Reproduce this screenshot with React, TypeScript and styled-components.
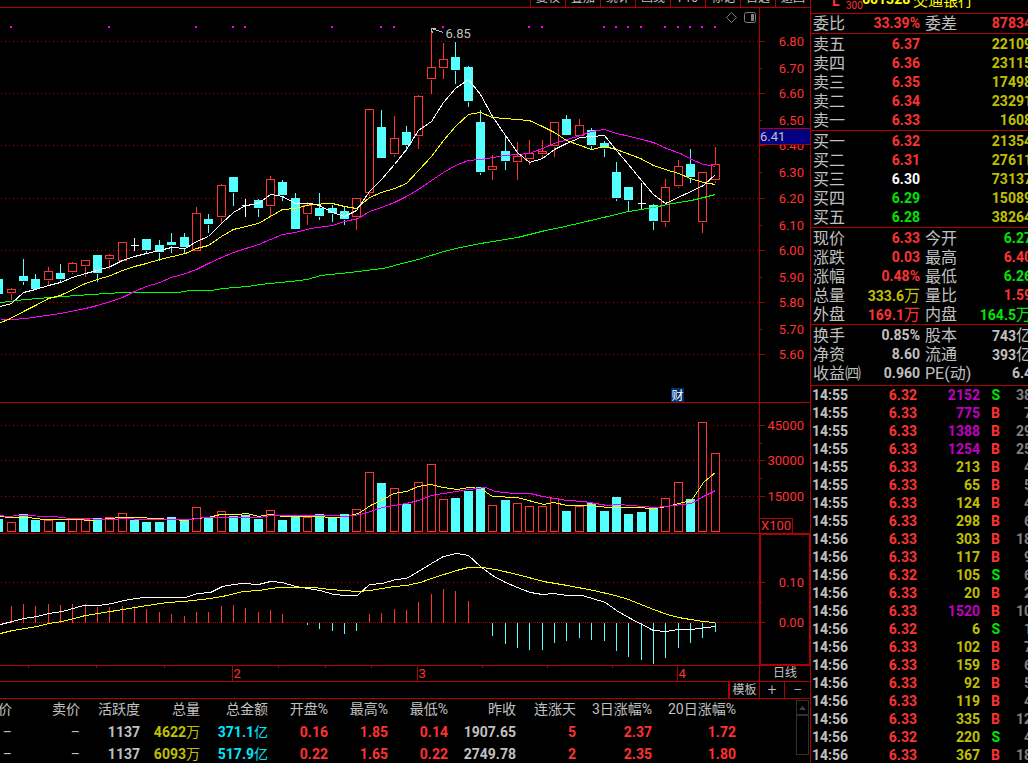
import React from 'react';
import styled, { createGlobalStyle } from 'styled-components';

const c = {
  line: '#b00000',
  red: '#ff3232',
  green: '#00e600',
  cyan: '#54ffff',
  amount: '#00e6ff',
  yellow: '#c0c000',
  bright: '#ffff00',
  magenta: '#ff00ff',
  violet: '#c000c0',
  gray: '#c0c0c0',
  dim: '#808080',
  white: '#ffffff',
};

const GlobalStyle = createGlobalStyle`
  * { box-sizing: border-box; }
  html, body { margin: 0; background: #000; }
  body { overflow: hidden; }
  body, button, table {
    font-family: Roboto, "Noto Sans CJK SC", sans-serif;
    color: ${c.gray};
  }
`;

/* ---------- chart data ---------- */

type Kind = 'up' | 'down' | 'flat';
type Candle = [number, number, number, number, number, Kind];

// x, high, body top, body bottom, low, kind
const candles: Candle[] = [
  [-2, 279, 279, 294, 294, 'down'],
  [11, 287, 289, 293, 299, 'up'],
  [23, 258, 276, 281, 284, 'down'],
  [35, 273, 279, 289, 289, 'down'],
  [48, 266, 271, 280, 284, 'up'],
  [60, 263, 273, 279, 281, 'down'],
  [72, 261, 263, 272, 273, 'up'],
  [85, 259, 260, 266, 276, 'up'],
  [97, 255, 255, 273, 281, 'down'],
  [109, 253, 255, 259, 268, 'up'],
  [122, 242, 242, 261, 261, 'up'],
  [134, 237, 245, 246, 250, 'flat'],
  [146, 239, 239, 250, 252, 'down'],
  [159, 239, 245, 252, 260, 'down'],
  [171, 232, 242, 245, 252, 'down'],
  [184, 232, 237, 247, 252, 'down'],
  [196, 206, 213, 251, 251, 'up'],
  [208, 213, 219, 224, 232, 'down'],
  [221, 183, 185, 217, 223, 'up'],
  [233, 177, 177, 192, 205, 'down'],
  [245, 198, 205, 206, 216, 'flat'],
  [258, 198, 200, 208, 216, 'down'],
  [270, 175, 179, 206, 216, 'up'],
  [282, 179, 182, 195, 200, 'down'],
  [295, 192, 198, 229, 229, 'down'],
  [307, 201, 205, 214, 224, 'up'],
  [319, 192, 208, 216, 219, 'down'],
  [332, 204, 208, 213, 221, 'down'],
  [344, 205, 211, 219, 224, 'down'],
  [356, 198, 198, 217, 229, 'up'],
  [369, 109, 109, 193, 195, 'up'],
  [381, 109, 127, 158, 158, 'down'],
  [394, 115, 138, 154, 156, 'up'],
  [406, 125, 132, 145, 150, 'down'],
  [418, 94, 96, 136, 148, 'up'],
  [431, 30, 67, 79, 93, 'up'],
  [443, 42, 59, 68, 78, 'up'],
  [455, 41, 57, 70, 83, 'down'],
  [468, 65, 67, 101, 106, 'down'],
  [480, 109, 122, 172, 174, 'down'],
  [492, 154, 166, 170, 179, 'up'],
  [505, 134, 151, 161, 169, 'down'],
  [517, 141, 156, 162, 179, 'up'],
  [529, 139, 153, 159, 164, 'up'],
  [542, 139, 151, 154, 158, 'up'],
  [554, 122, 122, 146, 156, 'up'],
  [566, 114, 119, 135, 135, 'down'],
  [579, 118, 125, 136, 136, 'up'],
  [591, 127, 130, 145, 148, 'down'],
  [604, 140, 143, 148, 156, 'down'],
  [616, 161, 172, 198, 200, 'down'],
  [628, 187, 187, 200, 211, 'down'],
  [641, 182, 203, 204, 208, 'flat'],
  [653, 203, 205, 221, 229, 'down'],
  [665, 178, 187, 222, 226, 'up'],
  [678, 159, 166, 186, 187, 'up'],
  [690, 148, 164, 177, 182, 'down'],
  [702, 172, 172, 222, 232, 'up'],
  [715, 146, 164, 180, 182, 'up'],
];

const volumeTops = [
  519, 522, 514, 520, 520, 522, 519, 519, 518, 517, 513, 520, 522, 522, 517, 519, 507, 518, 511, 516,
  515, 519, 510, 520, 517, 517, 514, 517, 514, 509, 472, 483, 488, 504, 482, 464, 499, 498, 491, 487,
  505, 500, 503, 506, 506, 498, 511, 506, 503, 511, 497, 514, 512, 508, 498, 482, 499, 422, 453,
];

// x, end of the bar; the bars start on the zero line
const macdBars: [number, number][] = [
  [11, 605], [23, 603], [35, 605], [48, 603], [60, 604], [72, 603], [85, 603], [97, 606], [109, 606],
  [122, 605], [134, 605], [146, 608], [159, 611], [171, 613], [184, 615], [196, 611], [208, 611], [221, 605],
  [233, 604], [245, 607], [258, 611], [270, 609], [282, 613], [307, 624], [319, 628], [332, 630], [344, 633],
  [356, 630], [369, 613], [381, 612], [394, 608], [406, 609], [418, 601], [431, 593], [443, 588], [455, 590],
  [468, 600], [492, 635], [505, 643], [517, 647], [529, 649], [542, 649], [554, 642], [566, 640], [579, 637],
  [591, 639], [604, 640], [616, 650], [628, 656], [641, 659], [653, 663], [665, 657], [678, 647], [690, 642],
  [702, 637], [715, 631],
];

const ma5 =
  '0,306 11,303 23,292 35,289 48,285 60,282 72,277 85,273 97,270 110,266 122,260 134,256 146,253 159,250 171,247 185,248 196,241 208,236 221,223 233,212 245,205 258,203 270,194 282,196 295,203 310,203 319,205 332,212 344,216 356,210 369,191 381,179 394,164 406,149 418,130 431,121 443,102 455,88 468,79 480,94 492,116 505,135 517,152 529,162 542,158 554,149 566,143 580,137 604,135 616,150 628,164 641,180 653,194 665,203 703,185 715,174';
const ma10 =
  '0,322 8,319 25,310 35,305 48,298 60,295 85,283 97,279 110,275 122,270 134,266 146,263 159,259 185,253 196,248 208,245 221,236 233,229 258,223 270,216 282,209 295,208 310,204 332,203 344,206 356,208 369,197 381,192 394,188 406,183 418,170 431,156 443,140 455,126 468,114 480,112 492,117 529,120 542,126 554,132 566,140 591,149 604,146 616,149 640,158 653,165 665,169 678,173 690,178 703,182 715,184';
const ma20 =
  '0,319 13,319 25,318 60,313 85,308 97,305 110,301 122,297 134,291 146,286 159,282 171,277 185,273 196,269 208,263 221,257 233,252 258,244 282,234 295,232 310,228 332,225 344,221 358,218 369,211 381,207 394,202 406,196 418,189 431,180 443,172 455,165 468,160 480,159 505,155 529,153 542,148 554,143 580,135 591,131 604,129 616,133 630,136 645,140 653,142 666,148 680,153 691,159 703,164 715,166';
const ma60 =
  '0,302 25,299 50,297 90,294 123,292 177,292 190,290 210,290 223,288 247,286 260,284 290,281 307,279 320,275 350,272 373,269 383,268 405,262 418,259 443,251 460,247 480,243 517,237 545,230 560,227 573,224 603,217 628,211 653,207 667,204 691,200 715,194';

const vol5 =
  '0,516 8,517 28,517 43,519 77,519 90,520 100,519 120,517 140,517 153,518 173,519 183,520 196,518 208,517 220,514 237,514 247,513 258,516 270,514 283,516 313,516 335,517 345,516 358,513 370,505 383,499 393,493 406,491 418,486 430,484 443,487 457,489 468,487 480,488 492,496 517,497 543,504 553,502 567,505 592,505 607,507 635,507 653,508 667,506 678,503 691,500 703,482 715,472';
const vol10 =
  '0,515 7,516 18,515 53,516 70,518 115,519 123,518 143,519 190,519 203,517 260,517 270,515 333,515 345,516 360,514 370,511 382,507 406,503 418,500 431,495 443,493 468,489 485,487 495,491 513,493 530,493 542,496 567,500 583,501 607,505 618,504 655,507 691,503 703,496 715,490';

const dif =
  '0,624 12,621 23,618 37,616 48,613 62,611 83,605 98,605 112,603 123,600 143,597 185,597 197,593 210,592 222,586 233,584 243,583 258,584 270,581 282,582 295,586 320,590 333,594 345,595 357,595 369,584 382,583 395,579 406,578 418,571 431,563 443,556 456,553 468,555 480,566 492,575 505,582 517,587 530,592 542,594 553,593 567,595 582,595 605,602 616,610 628,617 653,630 665,631 678,629 691,629 715,626';
const dea =
  '0,633 12,630 37,626 48,623 62,621 85,615 110,611 147,605 167,602 183,601 210,598 222,596 243,591 258,590 278,587 313,587 330,589 357,591 370,590 393,586 406,585 420,582 431,578 456,570 468,567 482,567 495,569 517,574 543,581 567,585 593,590 615,595 628,599 653,609 667,614 678,617 702,621 715,622';

const signalDots = [
  11, 109, 196, 233, 245, 332, 381, 394, 443, 529, 542, 604, 616, 628, 641, 665, 678, 690, 702, 715,
];

const priceLabels: [string, number][] = [
  ['6.80', 41], ['6.70', 68], ['6.60', 93], ['6.50', 120], ['6.40', 145], ['6.30', 172], ['6.20', 198],
  ['6.10', 225], ['6.00', 250], ['5.90', 277], ['5.80', 302], ['5.70', 329], ['5.60', 354],
];

/* ---------- chart parts ---------- */

const Shell = styled.div`
  display: flex;
  align-items: stretch;
  min-height: 100vh;
  background: #000;
`;

const Main = styled.main`
  flex: 1;
  min-width: 0;
`;

const TopBar = styled.nav`
  display: flex;
  justify-content: flex-end;
  align-items: flex-end;
  height: 8px;
  overflow: hidden;
  border-bottom: 1px solid ${c.line};
`;

const TopButton = styled.button`
  flex: none;
  width: 35px;
  height: 18px;
  padding: 0;
  border: 0;
  border-left: 1px solid ${c.line};
  background: none;
  font-size: 12px;
  line-height: 16px;
`;

const PaneRow = styled.section<{ $h: number }>`
  display: grid;
  grid-template-columns: minmax(0, 1fr) 51px;
  height: ${(p) => p.$h}px;
  border-bottom: 1px solid ${c.line};
`;

const Axis = styled.div<{ $framed?: boolean }>`
  overflow: hidden;
  border-left: 1px solid ${c.line};
  box-shadow: ${(p) => (p.$framed ? `inset 0 0 0 1px ${c.line}` : 'none')};
`;

const Canvas = styled.svg`
  display: block;
  width: 100%;
  height: 100%;
  overflow: hidden;
  shape-rendering: crispEdges;
`;

const Label = styled.text<{ $color?: string; $small?: boolean }>`
  font-size: ${(p) => (p.$small ? 12 : 13)}px;
  fill: ${(p) => p.$color ?? c.red};
`;

const GridLine = ({ y, dense }: { y: number; dense?: boolean }) => (
  <line x1="0.5" x2="100%" y1={y} y2={y} stroke={c.line} strokeDasharray={dense ? '1 1' : '1 3'} />
);

const Curve = ({ points, color }: { points: string; color: string }) => (
  <polyline points={points} fill="none" stroke={color} />
);

const Tick = ({ y, long }: { y: number; long?: boolean }) => (
  <line x1="0" x2={long ? 5 : 2} y1={y} y2={y} stroke={c.line} />
);

const colorOf = (kind: Kind) => (kind === 'up' ? c.red : kind === 'down' ? c.cyan : c.white);

const CandleMark = ({ k }: { k: Candle }) => {
  const [x, high, top, bottom, low, kind] = k;
  const color = colorOf(kind);
  if (kind === 'flat') {
    return <path d={`M${x} ${high}V${low}M${x - 4} ${top}H${x + 4}`} stroke={color} fill="none" />;
  }
  return (
    <g stroke={color} fill={kind === 'down' ? color : 'none'}>
      {high < top && <line x1={x} x2={x} y1={high} y2={top} />}
      {low > bottom && <line x1={x} x2={x} y1={bottom} y2={low} />}
      <rect x={x - 4} y={top} width="8" height={bottom - 1 - top} />
    </g>
  );
};

const PricePane = () => (
  <PaneRow $h={395}>
    <Canvas role="img" aria-label="K线">
      <g transform="translate(0.5 -7.5)">
        {[41, 93, 145, 198, 250, 302, 354].map((y) => <GridLine key={y} y={y} />)}
        {candles.map((k) => <CandleMark key={k[0]} k={k} />)}
        <Curve points={ma60} color="#00ff00" />
        <Curve points={ma20} color={c.magenta} />
        <Curve points={ma10} color={c.bright} />
        <Curve points={ma5} color={c.white} />
        {signalDots.map((x) => (
          <rect key={x} x={x - 1.5} y="25.5" width="2" height="2" fill={c.magenta} />
        ))}
        <path d="M431 28L443 32M431 28h4M431 28v3l2 1" stroke={c.gray} fill="none" />
        <Label x="445" y="37" $color={c.gray}>6.85</Label>
        <path d="M731 12l5 5-5 5-5-5z" stroke={c.dim} fill="none" shapeRendering="auto" />
        <rect x="744" y="12" width="11" height="10" rx="2" stroke={c.dim} fill="none" shapeRendering="auto" />
        <rect x="750.5" y="13.5" width="3" height="7" fill={c.dim} />
        <rect x="670.5" y="387.5" width="13" height="14" fill="#003070" />
        <Label x="671" y="399" $color={c.white} $small>财</Label>
      </g>
    </Canvas>
    <Axis>
      <Canvas>
        <g transform="translate(0 -7.5)">
          {priceLabels.map(([t, y], i) => (
            <React.Fragment key={t}>
              <Tick y={y} long={i % 2 === 0} />
              <Label x="44" y={y + 4} textAnchor="end">{t}</Label>
            </React.Fragment>
          ))}
          <rect x="-1" y="128" width="52" height="16" fill="#000080" stroke={c.line} />
          <Label x="0" y="140" $color={c.gray}>6.41</Label>
        </g>
      </Canvas>
    </Axis>
  </PaneRow>
);

const VolumePane = () => (
  <PaneRow $h={131}>
    <Canvas role="img" aria-label="成交量">
      <g transform="translate(0.5 -402.5)">
        {[425, 460, 496].map((y) => <GridLine key={y} y={y} />)}
        {candles.map(([x, , , , , kind], i) => {
          const solid = kind === 'down' || i === 11 || i === 20 || i === 52;
          return (
            <rect
              key={x}
              x={x - 4}
              y={volumeTops[i]}
              width="8"
              height={531 - volumeTops[i]}
              stroke={solid ? c.cyan : c.red}
              fill={solid ? c.cyan : '#000'}
            />
          );
        })}
        <Curve points={vol5} color={c.bright} />
        <Curve points={vol10} color={c.magenta} />
      </g>
    </Canvas>
    <Axis>
      <Canvas>
        <g transform="translate(0 -402.5)">
          {[425, 460, 496].map((y) => <Tick key={y} y={y} long />)}
          {[443, 478].map((y) => <Tick key={y} y={y} />)}
          <Label x="44" y="429" textAnchor="end">45000</Label>
          <Label x="44" y="464" textAnchor="end">30000</Label>
          <Label x="44" y="500" textAnchor="end">15000</Label>
          <rect x="-1" y="518" width="33" height="16" fill="none" stroke={c.line} />
          <Label x="1" y="529">X100</Label>
        </g>
      </Canvas>
    </Axis>
  </PaneRow>
);

const MacdPane = () => (
  <PaneRow $h={132}>
    <Canvas role="img" aria-label="MACD">
      <g transform="translate(0.5 -533.5)">
        <GridLine y={582} />
        <GridLine y={622} dense />
        {macdBars.map(([x, y]) => (
          <line key={x} x1={x} x2={x} y1="622" y2={y} stroke={y < 622 ? c.red : c.cyan} />
        ))}
        <Curve points={dif} color={c.white} />
        <Curve points={dea} color={c.bright} />
      </g>
    </Canvas>
    <Axis $framed>
      <Canvas>
        <g transform="translate(0 -533.5)">
          <Tick y={582} long />
          <Tick y={602} />
          <Tick y={622} long />
          <Label x="44" y="586" textAnchor="end">0.10</Label>
          <Label x="44" y="626" textAnchor="end">0.00</Label>
        </g>
      </Canvas>
    </Axis>
  </PaneRow>
);

const Period = styled.button`
  border: 0;
  border-left: 1px solid ${c.line};
  padding: 0;
  background: none;
  font-size: 12px;
  line-height: 15px;
`;

const TimeAxis = () => (
  <PaneRow $h={16}>
    <Canvas>
      <g transform="translate(0.5 0)">
        {[28, 96, 164, 278, 325, 371, 482, 547, 612].map((x) => (
          <line key={x} x1={x} x2={x} y1="0" y2="2" stroke={c.line} />
        ))}
        {([['2', 232], ['3', 417], ['4', 677]] as [string, number][]).map(([t, x]) => (
          <React.Fragment key={t}>
            <line x1={x} x2={x} y1="0" y2="16" stroke={c.line} />
            <Label x={x + 1} y="12">{t}</Label>
          </React.Fragment>
        ))}
      </g>
    </Canvas>
    <Period>日线</Period>
  </PaneRow>
);

const ToolStrip = styled.div`
  display: flex;
  justify-content: flex-end;
  height: 17px;
  border-bottom: 1px solid ${c.line};
`;

const StripButton = styled.button<{ $w: number; $thick?: boolean }>`
  width: ${(p) => p.$w}px;
  padding: 0;
  border: 0;
  border-left: ${(p) => (p.$thick ? 2 : 1)}px solid ${c.line};
  background: none;
  font-size: ${(p) => (p.$thick ? 12 : 16)}px;
  font-weight: ${(p) => (p.$thick ? 400 : 300)};
  line-height: 16px;
`;

/* ---------- quote table ---------- */

const QuoteArea = styled.div`
  display: flex;
  justify-content: space-between;
  height: 64px;
  overflow: hidden;
`;

const QuoteTable = styled.table`
  flex: none;
  width: 784px;
  margin-left: -48px;
  border-collapse: collapse;
  table-layout: fixed;
`;

const QuoteHead = styled.th`
  height: 22px;
  padding: 0;
  vertical-align: top;
  text-align: right;
  white-space: nowrap;
  font-size: 14px;
  font-weight: 400;
  line-height: 20px;
`;

const QuoteCell = styled.td<{ $color?: string; $plain?: boolean }>`
  height: 22px;
  padding: 0;
  text-align: right;
  white-space: nowrap;
  font-size: 14px;
  font-weight: ${(p) => (p.$plain ? 400 : 700)};
  line-height: 22px;
  color: ${(p) => p.$color ?? c.gray};
`;

const Unit = styled.span<{ $size: number }>`
  font-size: ${(p) => p.$size}px;
  font-weight: 400;
`;

const ScrollTrack = styled.div`
  display: flex;
  flex-direction: column;
  width: 13px;
  height: 55px;
  margin: 1px 1px 0 0;
  border: 1px solid #303030;
`;

const ScrollButton = styled.button`
  display: flex;
  align-items: center;
  justify-content: center;
  height: 15px;
  padding: 0;
  border: 0;
  border-bottom: 2px solid #303030;
  background: none;
`;

const quoteColumns: [string, number][] = [
  ['买价', 60], ['卖价', 68], ['活跃度', 60], ['总量', 60], ['总金额', 68], ['开盘%', 60],
  ['最高%', 60], ['最低%', 60], ['昨收', 68], ['连涨天', 60], ['3日涨幅%', 76], ['20日涨幅%', 84],
];

const quoteRows = [
  ['–', '–', '1137', '4622万', '371.1亿', '0.16', '1.85', '0.14', '1907.65', '5', '2.37', '1.72'],
  ['–', '–', '1137', '6093万', '517.9亿', '0.22', '1.65', '0.22', '2749.78', '2', '2.35', '1.80'],
];

const quoteColors = [
  c.gray, c.gray, c.gray, c.yellow, c.amount, c.red, c.red, c.red, c.gray, c.red, c.red, c.red,
];

const withUnit = (value: string, size: number) => {
  const last = value.slice(-1);
  return last === '万' || last === '亿' ? (
    <>
      {value.slice(0, -1)}
      <Unit $size={size}>{last}</Unit>
    </>
  ) : (
    value
  );
};

const Quotes = () => (
  <QuoteArea>
    <QuoteTable>
      <colgroup>
        {quoteColumns.map(([t, w]) => <col key={t} width={w} />)}
      </colgroup>
      <thead>
        <tr>{quoteColumns.map(([t]) => <QuoteHead key={t} scope="col">{t}</QuoteHead>)}</tr>
      </thead>
      <tbody>
        {quoteRows.map((row) => (
          <tr key={row[3]}>
            {row.map((v, i) => (
              <QuoteCell key={i} $color={quoteColors[i]} $plain={v === '–'}>{withUnit(v, 14)}</QuoteCell>
            ))}
          </tr>
        ))}
      </tbody>
    </QuoteTable>
    <ScrollTrack>
      <ScrollButton aria-label="向上滚动">
        <svg width="7" height="4"><path d="M3.5 0L7 4H0z" fill="#404040" /></svg>
      </ScrollButton>
    </ScrollTrack>
  </QuoteArea>
);

/* ---------- right panel ---------- */

const Side = styled.aside`
  flex: none;
  width: 218px;
  height: 100vh;
  overflow: hidden;
  border-left: 1px solid ${c.line};
`;

const Title = styled.header`
  display: flex;
  align-items: flex-end;
  width: 221px;
  height: 14px;
  padding-left: 21px;
  overflow: hidden;
  border-bottom: 1px solid ${c.line};
  white-space: nowrap;
`;

const Flag = styled.span`
  width: 14px;
  padding-bottom: 4px;
  font-size: 14px;
  font-weight: 700;
  line-height: 16px;
  color: ${c.red};
`;

const IndexTag = styled.span`
  width: 16px;
  font-size: 10px;
  line-height: 14px;
  color: ${c.red};
`;

const Code = styled.span`
  width: 51px;
  padding-bottom: 6px;
  font-size: 14px;
  font-weight: 700;
  line-height: 16px;
  color: ${c.bright};
`;

const StockName = styled.span`
  padding-bottom: 3px;
  font-size: 15px;
  line-height: 18px;
  color: ${c.bright};
`;

const Facts = styled.dl<{ $bottom?: number; $top?: number }>`
  display: grid;
  grid-template-columns: 107px 107px;
  column-gap: 5px;
  width: 221px;
  margin: 0;
  padding: ${(p) => p.$top ?? 1}px 0 ${(p) => p.$bottom ?? 0}px 2px;
  border-bottom: 1px solid ${c.line};
`;

const Fact = styled.div`
  display: flex;
  justify-content: space-between;
  height: 19px;
  white-space: nowrap;
`;

const Term = styled.dt`
  font-size: 16px;
  font-weight: 400;
  line-height: 19px;
`;

const Value = styled.dd<{ $color?: string }>`
  margin: 0;
  font-size: 14px;
  font-weight: 700;
  line-height: 19px;
  color: ${(p) => p.$color ?? c.gray};
`;

const BookRow = styled.div`
  display: grid;
  grid-template-columns: 54px 53px 112px;
  grid-column: 1 / 3;
  height: 19px;
`;

const BookValue = styled(Value)`
  text-align: right;
`;

type BookEntry = [string, string, string, string];
const asks: BookEntry[] = [
  ['卖五', '6.37', '22109', c.red],
  ['卖四', '6.36', '23115', c.red],
  ['卖三', '6.35', '17498', c.red],
  ['卖二', '6.34', '23291', c.red],
  ['卖一', '6.33', '1608', c.red],
];
const bids: BookEntry[] = [
  ['买一', '6.32', '21354', c.red],
  ['买二', '6.31', '27611', c.red],
  ['买三', '6.30', '73137', c.white],
  ['买四', '6.29', '15089', c.green],
  ['买五', '6.28', '38264', c.green],
];

const Book = ({ rows }: { rows: BookEntry[] }) => (
  <Facts>
    {rows.map(([label, price, size, color]) => (
      <BookRow key={label}>
        <Term>{label}</Term>
        <BookValue $color={color}>{price}</BookValue>
        <BookValue $color={c.yellow}>{size}</BookValue>
      </BookRow>
    ))}
  </Facts>
);

type FactEntry = [string, string, string?];
const FactList = ({ rows, top, bottom }: { rows: FactEntry[]; top?: number; bottom?: number }) => (
  <Facts $top={top} $bottom={bottom}>
    {rows.map(([label, value, color]) => (
      <Fact key={label}>
        <Term>{label}</Term>
        <Value $color={color}>{withUnit(value, 16)}</Value>
      </Fact>
    ))}
  </Facts>
);

const orderFacts: FactEntry[] = [
  ['委比', '33.39%', c.red], ['委差', '87834', c.red],
];

const priceFacts: FactEntry[] = [
  ['现价', '6.33', c.red], ['今开', '6.27', c.green],
  ['涨跌', '0.03', c.red], ['最高', '6.40', c.red],
  ['涨幅', '0.48%', c.red], ['最低', '6.26', c.green],
  ['总量', '333.6万', c.yellow], ['量比', '1.59', c.red],
  ['外盘', '169.1万', c.red], ['内盘', '164.5万', c.green],
];

const shareFacts: FactEntry[] = [
  ['换手', '0.85%'], ['股本', '743亿'],
  ['净资', '8.60'], ['流通', '393亿'],
  ['收益㈣', '0.960'], ['PE(动)', '6.4'],
];

const TradeTable = styled.table`
  width: 221px;
  margin: 0;
  border-collapse: collapse;
  table-layout: fixed;
`;

const TradeCell = styled.td<{ $color?: string; $left?: boolean }>`
  height: 18px;
  padding: 0 0 0 ${(p) => (p.$left ? 1 : 0)}px;
  text-align: ${(p) => (p.$left ? 'left' : 'right')};
  font-size: 14px;
  font-weight: 700;
  line-height: 18px;
  color: ${(p) => p.$color ?? c.gray};
`;

const trades: [string, string, string, string, string][] = [
  ['14:55', '6.32', '2152', 'S', '38'],
  ['14:55', '6.33', '775', 'B', '7'],
  ['14:55', '6.33', '1388', 'B', '29'],
  ['14:55', '6.33', '1254', 'B', '25'],
  ['14:55', '6.33', '213', 'B', '4'],
  ['14:55', '6.33', '65', 'B', '5'],
  ['14:55', '6.33', '124', 'B', '4'],
  ['14:55', '6.33', '298', 'B', '6'],
  ['14:56', '6.33', '303', 'B', '18'],
  ['14:56', '6.33', '117', 'B', '9'],
  ['14:56', '6.32', '105', 'S', '6'],
  ['14:56', '6.33', '20', 'B', '2'],
  ['14:56', '6.33', '1520', 'B', '10'],
  ['14:56', '6.32', '6', 'S', '1'],
  ['14:56', '6.33', '102', 'B', '7'],
  ['14:56', '6.33', '159', 'B', '6'],
  ['14:56', '6.33', '92', 'B', '5'],
  ['14:56', '6.33', '119', 'B', '4'],
  ['14:56', '6.33', '335', 'B', '12'],
  ['14:56', '6.32', '220', 'S', '4'],
  ['14:56', '6.33', '367', 'B', '18'],
];

const Trades = () => (
  <TradeTable>
    <colgroup>
      {[46, 60, 63, 20, 32].map((w, i) => <col key={i} width={w} />)}
    </colgroup>
    <tbody>
      {trades.map(([time, price, size, side, count], i) => (
        <tr key={i}>
          <TradeCell $left>{time}</TradeCell>
          <TradeCell $color={c.red}>{price}</TradeCell>
          <TradeCell $color={Number(size) > 500 ? c.violet : c.yellow}>{size}</TradeCell>
          <TradeCell $color={side === 'S' ? c.green : c.red}>{side}</TradeCell>
          <TradeCell $color={c.dim}>{count}</TradeCell>
        </tr>
      ))}
    </tbody>
  </TradeTable>
);

export default function App() {
  return (
    <>
      <GlobalStyle />
      <Shell>
        <Main>
          <TopBar>
            {['复权', '叠加', '统计', '画线', 'F10', '标记', '自选', '返回'].map((t) => (
              <TopButton key={t}>{t}</TopButton>
            ))}
          </TopBar>
          <PricePane />
          <VolumePane />
          <MacdPane />
          <TimeAxis />
          <ToolStrip>
            <StripButton $w={31} $thick>模板</StripButton>
            <StripButton $w={25}>+</StripButton>
            <StripButton $w={26}>−</StripButton>
          </ToolStrip>
          <Quotes />
        </Main>
        <Side>
          <Title>
            <Flag>L</Flag>
            <IndexTag>300</IndexTag>
            <Code>601328</Code>
            <StockName>交通银行</StockName>
          </Title>
          <FactList top={0} rows={orderFacts} />
          <Book rows={asks} />
          <Book rows={bids} />
          <FactList rows={priceFacts} />
          <FactList rows={shareFacts} bottom={2} />
          <Trades />
        </Side>
      </Shell>
    </>
  );
}
